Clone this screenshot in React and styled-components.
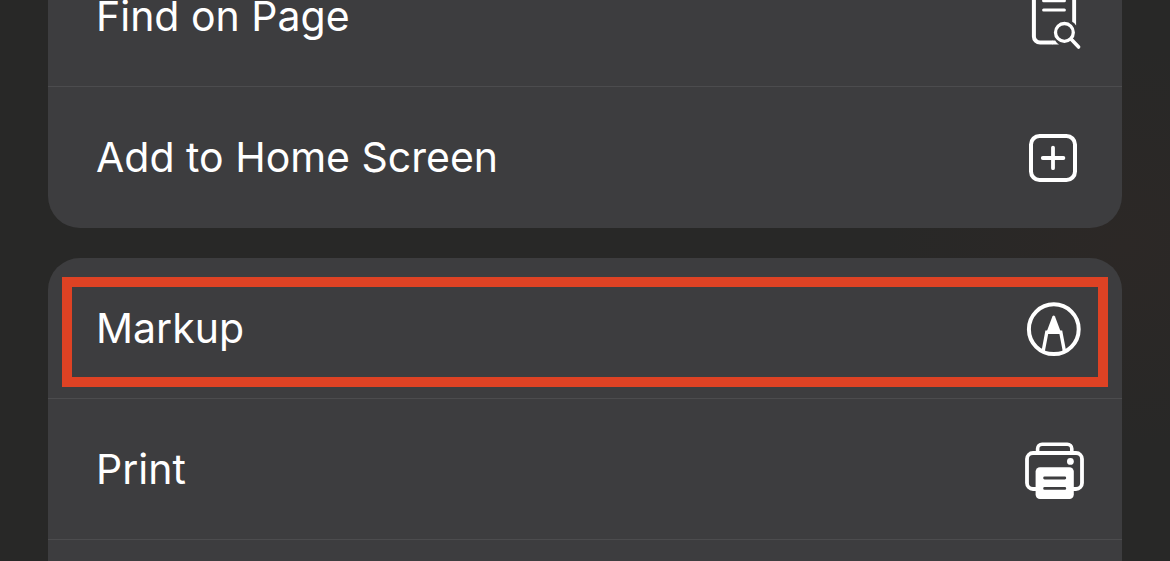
import React from 'react'
import styled, { createGlobalStyle } from 'styled-components';

const FindIcon = () => (
  <Icon viewBox="0 0 60 64" aria-hidden="true">
    <path d="M9.9 -4V52.4a6.2 6.2 0 0 0 6.2 6.2H29" strokeWidth="4" />
    <path d="M28.6 56.6H31.2Q32.4 59 35 60.6H28.6Z" fill="#fff" stroke="none" />
    <path d="M48.2 -4H52.1V41.4Q50.6 39.2 48.2 37.8Z" fill="#fff" stroke="none" />
    <path d="M19.6 16.8H40.4M19.6 26H40.4" strokeWidth="3" strokeLinecap="round" />
    <circle cx="40.4" cy="48.4" r="8.9" strokeWidth="3.3" />
    <path d="M47 55L54.6 63" strokeWidth="3.6" strokeLinecap="round" />
  </Icon>
)

const AddIcon = () => (
  <Icon viewBox="0 0 60 64" aria-hidden="true">
    <rect x="7" y="11" width="44" height="44" rx="8.5" strokeWidth="4" />
    <path d="M18.8 33H39.4M29 22.6V43.2" strokeWidth="3.8" strokeLinecap="round" />
  </Icon>
)

const MarkupIcon = () => (
  <Icon viewBox="0 0 60 64" aria-hidden="true">
    <circle cx="29.8" cy="33.2" r="24.9" strokeWidth="4" />
    <path d="M19.2 55L22.8 36.3H36.8L40.4 55" strokeWidth="3.4" />
    <path d="M28.4 20.6q1.3-2 2.6 0L36.8 36H22.6Z" fill="#fff" stroke="none" />
  </Icon>
)

const PrintIcon = () => (
  <Icon viewBox="0 0 60 64" aria-hidden="true">
    <path d="M13.6 16V11.7a4.5 4.5 0 0 1 4.5-4.5H43.3a4.5 4.5 0 0 1 4.5 4.5V16" strokeWidth="3.6" />
    <path d="M13 52H9a6 6 0 0 1-6-6V22a6 6 0 0 1 6-6H52a6 6 0 0 1 6 6V46a6 6 0 0 1-6 6H48" strokeWidth="3.8" />
    <circle cx="46.4" cy="24.4" r="3.4" fill="#fff" stroke="none" />
    <rect x="11.6" y="30.2" width="38.2" height="31.8" rx="4.4" fill="#fff" stroke="none" />
    <path d="M20.6 41H40.8M20.6 51.4H40.8" stroke="#3d3d3f" strokeWidth="2.8" strokeLinecap="round" />
  </Icon>
)

const App = () => {
  return (
    <>
      <GlobalStyle />
      <Sheet>
        <Group $scrolled>
          <Row>
            <Action type="button">
              Find on Page
              <FindIcon />
            </Action>
          </Row>
          <Row>
            <Action type="button">
              Add to Home Screen
              <AddIcon />
            </Action>
          </Row>
        </Group>
        {/* this group runs on past the bottom of the screen */}
        <Group $open>
          <Row $highlighted>
            <Action type="button">
              Markup
              <MarkupIcon />
            </Action>
          </Row>
          <Row>
            <Action type="button">
              Print
              <PrintIcon />
            </Action>
          </Row>
        </Group>
      </Sheet>
    </>
  )
}

export default App

const GlobalStyle = createGlobalStyle`
  * {
    box-sizing:border-box;
  }
  body {
    margin:0;
    background:#282827;
  }
`
const Sheet = styled.main`
  display:flex;
  flex-direction:column;
  gap:30px;
  height:100vh;
  padding:0 48px;
  overflow:hidden;
  background:
    radial-gradient(ellipse 240px 200px at 96% 44%, #2c2826, transparent),
    #282827;
`
const Group = styled.ul`
  flex:${({ $open }) => ($open ? '1 0 auto' : 'none')};
  margin:0;
  margin-top:${({ $scrolled }) => ($scrolled ? '-54px' : '0')};
  padding:0;
  list-style:none;
  background:#3d3d3f;
  border-radius:${({ $open }) => ($open ? '32px 32px 0 0' : '32px')};
`
const Row = styled.li`
  position:relative;
  border-bottom:1px solid #4c4c4e;

  ${Group}:first-child > &:last-child {
    border-bottom-color:transparent;
  }

  &::after {
    content:${({ $highlighted }) => ($highlighted ? "''" : 'none')};
    position:absolute;
    inset:19px 14px 11px;
    border:10px solid #de4224;
    pointer-events:none;
  }
`
const Action = styled.button`
  display:flex;
  align-items:center;
  justify-content:space-between;
  width:100%;
  height:140px;
  padding:0 38px 0 48px;
  border:0;
  background:none;
  color:#fff;
  font-family:Inter, 'Liberation Sans', sans-serif;
  font-size:41px;
  font-weight:400;
  line-height:50px;
  text-align:left;
  cursor:pointer;
`
const Icon = styled.svg`
  flex:none;
  width:60px;
  height:64px;
  overflow:visible;
  fill:none;
  stroke:#fff;
`
